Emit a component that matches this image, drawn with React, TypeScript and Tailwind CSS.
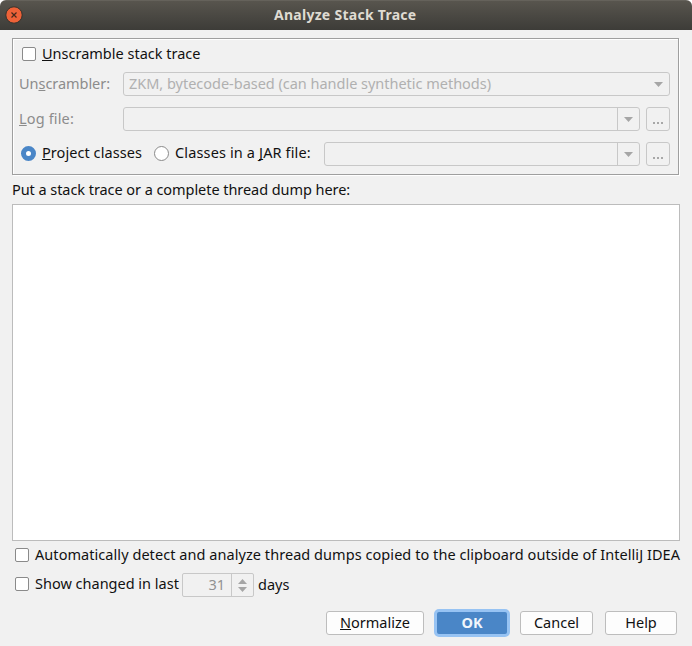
import React, { useState } from "react";

interface CheckBoxProps {
    checked: boolean;
    onChange: (value: boolean) => void;
    className?: string;
}

interface ButtonProps {
    className: string;
    children: React.ReactNode;
}

const CheckBox: React.FC<CheckBoxProps> = ({ checked, onChange, className = "" }) => {
    return (
        <input
            type="checkbox"
            checked={checked}
            onChange={(e) => onChange(e.target.checked)}
            className={`h-3.5 w-3.5 shrink-0 appearance-none rounded-[2px] border border-[#8a8a8a] bg-white checked:bg-[#4a86c7] ${className}`}
        />
    );
};

const Key = ({ children }: { children: string }) => (
    <span className="underline decoration-1 underline-offset-[1px] [text-decoration-skip-ink:none]">{children}</span>
);

const Arrow = () => (
    <svg width="9" height="5" viewBox="0 0 9 5" className="shrink-0">
        <path d="M0 0h9L4.5 5z" fill="#a6a6a6" />
    </svg>
);

const PathField = ({ className }: { className: string }) => (
    <>
        <div className={`flex h-6 justify-end rounded-[3px] border border-[#c8c8c8] ${className}`}>
            <div className="flex w-[22px] items-center justify-center border-l border-[#c8c8c8]">
                <Arrow />
            </div>
        </div>
        <button className="ml-1.5 flex h-6 w-6 shrink-0 items-end justify-center gap-0.5 rounded-[3px] border border-[#c8c8c8] pb-[6px]">
            <span className="h-0.5 w-0.5 bg-[#a8a8a8]"></span>
            <span className="h-0.5 w-0.5 bg-[#a8a8a8]"></span>
            <span className="h-0.5 w-0.5 bg-[#a8a8a8]"></span>
        </button>
    </>
);

const Button: React.FC<ButtonProps> = ({ className, children }) => (
    <button className={`flex h-6 items-center justify-center rounded-[3px] border border-[#bdbdbd] bg-[#fdfdfd] pb-0.5 ${className}`}>
        {children}
    </button>
);

const App: React.FC = () => {
    const [unscramble, setUnscramble] = useState(false);
    const [autoDetect, setAutoDetect] = useState(false);
    const [showChanged, setShowChanged] = useState(false);
    const [source, setSource] = useState("project");

    return (
        <div className="bg-white">
            <div className="flex h-[646px] w-[692px] flex-col overflow-hidden rounded-t-[6px] bg-[#f1f1f1] font-['Noto_Sans',sans-serif] text-[14.5px] leading-5 whitespace-nowrap text-[#111111]">
                <div className="flex h-[30px] shrink-0 items-center border-t border-[#65625b] bg-linear-to-b from-[#58554e] to-[#3d3c38] pb-0.5 pl-[5px]">
                    <svg width="18" height="18" viewBox="0 0 18 18" className="shrink-0">
                        <circle cx="9" cy="9" r="8.2" fill="#ee6238" stroke="#35322d" />
                        <path d="M6.5 6.5l5 5M11.5 6.5l-5 5" stroke="#45291c" strokeWidth="1.2" />
                    </svg>
                    <h1 className="ml-[251px] w-[144px] text-[14px] font-bold tracking-[0.27px] text-[#dfdbd2]">Analyze Stack Trace</h1>
                </div>

                <div className="mt-2 ml-3 flex h-[137px] w-[667px] shrink-0 flex-col border border-[#9f9f9f] shadow-[1px_1px_0_#fff,inset_1px_1px_0_#fff]">
                    <label className="mt-[5px] ml-[9px] flex h-5 items-center">
                        <CheckBox checked={unscramble} onChange={setUnscramble} />
                        <span className="ml-1.5 w-[158px] pb-0.5"><Key>U</Key>nscramble stack trace</span>
                    </label>
                    <div className="mt-2 ml-1.5 flex h-6 items-center">
                        <span className="w-[104px] pb-0.5 tracking-[-0.05px] text-[#8c8c8c]">Un<Key>s</Key>crambler:</span>
                        <div className="flex h-6 w-[547px] items-center justify-between rounded-[3px] border border-[#c8c8c8] pr-[6px] pl-[5px] text-[#b0b0b0]">
                            <span className="pb-0.5 tracking-[-0.02px]">ZKM, bytecode-based (can handle synthetic methods)</span>
                            <Arrow />
                        </div>
                    </div>
                    <div className="mt-[11px] ml-1.5 flex h-6 items-center">
                        <span className="w-[104px] pb-0.5 tracking-[0.15px] text-[#8c8c8c]"><Key>L</Key>og file:</span>
                        <PathField className="w-[517px]" />
                    </div>
                    <div className="mt-[11px] ml-2 flex h-6 items-center">
                        <input
                            type="radio"
                            checked={source === "project"}
                            onChange={() => setSource("project")}
                            className="mb-[1px] h-[15px] w-[15px] appearance-none rounded-full border border-[#8a8a8a] bg-white checked:border-5 checked:border-[#4a86c7]"
                        />
                        <span className="ml-1.5 w-[100px] pb-1 tracking-[0.06px]"><Key>P</Key>roject classes</span>
                        <input
                            type="radio"
                            checked={source === "jar"}
                            onChange={() => setSource("jar")}
                            className="mb-[1px] ml-3 h-[15px] w-[15px] appearance-none rounded-full border border-[#8a8a8a] bg-white checked:border-5 checked:border-[#4a86c7]"
                        />
                        <span className="ml-1.5 w-[149px] pb-1 tracking-[0.14px]">Classes in a <Key>J</Key>AR file:</span>
                        <PathField className="w-[316px]" />
                    </div>
                </div>

                <span className="mt-1 ml-3 h-5 tracking-[-0.06px]">Put a stack trace or a complete thread dump here:</span>
                <textarea className="mt-[5px] ml-3 h-[337px] w-[668px] shrink-0 resize-none border border-[#bcbcbc] bg-white outline-none"></textarea>

                <label className="mt-1 ml-[15px] flex h-5 items-center">
                    <CheckBox checked={autoDetect} onChange={setAutoDetect} />
                    <span className="ml-1.5 pb-0.5 tracking-[0.055px]">Automatically detect and analyze thread dumps copied to the clipboard outside of IntelliJ IDEA</span>
                </label>
                <div className="mt-2 ml-[15px] flex h-6 items-center">
                    <CheckBox checked={showChanged} onChange={setShowChanged} className="mb-0.5" />
                    <span className="ml-1.5 w-[147px] pb-1">Show changed in last</span>
                    <div className="flex h-6 w-[72px] rounded-[2px] border border-[#c8c8c8] text-[#929292]">
                        <span className="w-12 pr-[6px] text-right leading-[21px]">31</span>
                        <div className="flex w-[22px] flex-col items-center justify-center gap-[3px] border-l border-[#c8c8c8]">
                            <svg width="9" height="5" viewBox="0 0 9 5"><path d="M0 5h9L4.5 0z" fill="#a6a6a6" /></svg>
                            <Arrow />
                        </div>
                    </div>
                    <span className="ml-1 pb-0.5">days</span>
                </div>

                <div className="mt-3 flex h-7 items-center pl-[326px]">
                    <Button className="w-[98px]"><span><Key>N</Key>ormalize</span></Button>
                    <button className="ml-2.5 flex h-7 w-[76px] items-center justify-center rounded-[5px] border-3 border-[#97c3f3] bg-[#4a86c7] pb-0.5 font-bold text-[#f2f6fb]">
                        OK
                    </button>
                    <Button className="ml-2.5 w-[73px]">Cancel</Button>
                    <Button className="ml-3 w-[72px]">Help</Button>
                </div>
            </div>
        </div>
    );
};

export default App;
